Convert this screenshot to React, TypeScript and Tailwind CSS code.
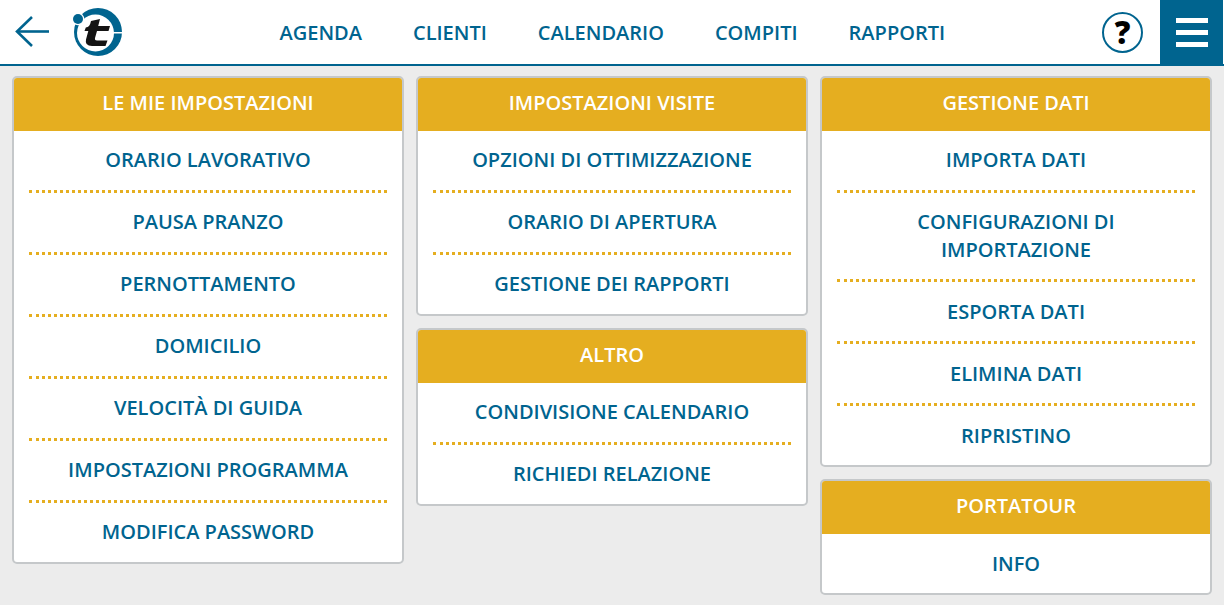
const navItems = ["AGENDA", "CLIENTI", "CALENDARIO", "COMPITI", "RAPPORTI"];

function Card({ title, items }: { title: string; items: string[] }) {
  return (
    <div className="overflow-hidden rounded-[5px] border-2 border-[#c5c8ca] bg-white">
      <div className="flex h-[53px] items-center justify-center bg-[#e5ae20] pb-[4px] text-[20px] font-semibold text-white">
        {title}
      </div>
      <div className="px-[15px]">
        {items.map((item, i) => (
          <div
            key={item}
            className={
              i < items.length - 1
                ? "border-b-[3px] border-dotted border-[#e5ae20] px-4 pt-[15.3px] pb-[16.5px] text-center text-[20px] leading-[27.24px] font-semibold text-[#00648f]"
                : "px-4 pt-[15.3px] pb-[16.5px] text-center text-[20px] leading-[27.24px] font-semibold text-[#00648f]"
            }
          >
            {item}
          </div>
        ))}
      </div>
    </div>
  );
}

export default function App() {
  return (
    <div className="h-[605px] overflow-hidden bg-[#ececec] font-['Open_Sans',sans-serif]">
      <header className="flex h-[66px] items-center border-b-2 border-[#00648f] bg-white">
        <button className="ml-[15px] flex h-[64px] w-[36px] items-center">
          <svg width="34" height="34" viewBox="0 0 34 34" fill="none" stroke="#00648f" strokeWidth="2.6">
            <path d="M34 16.5H2" />
            <path d="M17 2 2 16.5 17 31" />
          </svg>
        </button>
        <svg className="ml-[21px]" width="52" height="52" viewBox="0 0 52 52">
          <circle cx="26" cy="26" r="24" fill="#00648f" />
          <circle cx="23.500" cy="27" r="18.500" fill="#fff" />
          <rect x="41" y="26" width="10" height="1.500" fill="#fff" />
          <circle cx="6" cy="13" r="6.200" fill="#fff" />
          <circle cx="6" cy="13" r="5" fill="#00648f" />
          <path d="M19 15l9-2-1.800 7H38l-1.500 5H25l-2 7q-.5 2.500 2 2.500h10.500L33.500 40H20q-7.500 0-6-6.500l2.300-8.500H12.500l1.300-3.500q4 0 5.200-6.500z" fill="#141414" />
        </svg>
        <nav className="ml-[155.5px] flex gap-[51px] pt-[1px] text-[20px] font-semibold text-[#00648f]">
          {navItems.map((item) => (
            <span key={item}>{item}</span>
          ))}
        </nav>
        <div className="ml-auto flex h-[64px] items-center">
          <div className="mr-[17px] flex h-[41px] w-[41px] items-center justify-center rounded-full border-2 border-[#00648f] text-[31px] leading-none font-extrabold text-black">
            ?
          </div>
          <button className="mr-px flex h-[64px] w-[63px] flex-col items-center justify-center gap-[7px] bg-[#00648f] pt-px">
            <span className="h-[5px] w-[32px] bg-white" />
            <span className="h-[5px] w-[32px] bg-white" />
            <span className="h-[5px] w-[32px] bg-white" />
          </button>
        </div>
      </header>
      <main className="grid grid-cols-3 items-start gap-3 px-3 pt-[10px]">
        <div className="flex flex-col gap-3">
          <Card
            title="LE MIE IMPOSTAZIONI"
            items={[
              "ORARIO LAVORATIVO",
              "PAUSA PRANZO",
              "PERNOTTAMENTO",
              "DOMICILIO",
              "VELOCITÀ DI GUIDA",
              "IMPOSTAZIONI PROGRAMMA",
              "MODIFICA PASSWORD",
            ]}
          />
        </div>
        <div className="flex flex-col gap-3">
          <Card
            title="IMPOSTAZIONI VISITE"
            items={["OPZIONI DI OTTIMIZZAZIONE", "ORARIO DI APERTURA", "GESTIONE DEI RAPPORTI"]}
          />
          <Card title="ALTRO" items={["CONDIVISIONE CALENDARIO", "RICHIEDI RELAZIONE"]} />
        </div>
        <div className="flex flex-col gap-3">
          <Card
            title="GESTIONE DATI"
            items={["IMPORTA DATI", "CONFIGURAZIONI DI IMPORTAZIONE", "ESPORTA DATI", "ELIMINA DATI", "RIPRISTINO"]}
          />
          <Card title="PORTATOUR" items={["INFO"]} />
        </div>
      </main>
    </div>
  );
}
